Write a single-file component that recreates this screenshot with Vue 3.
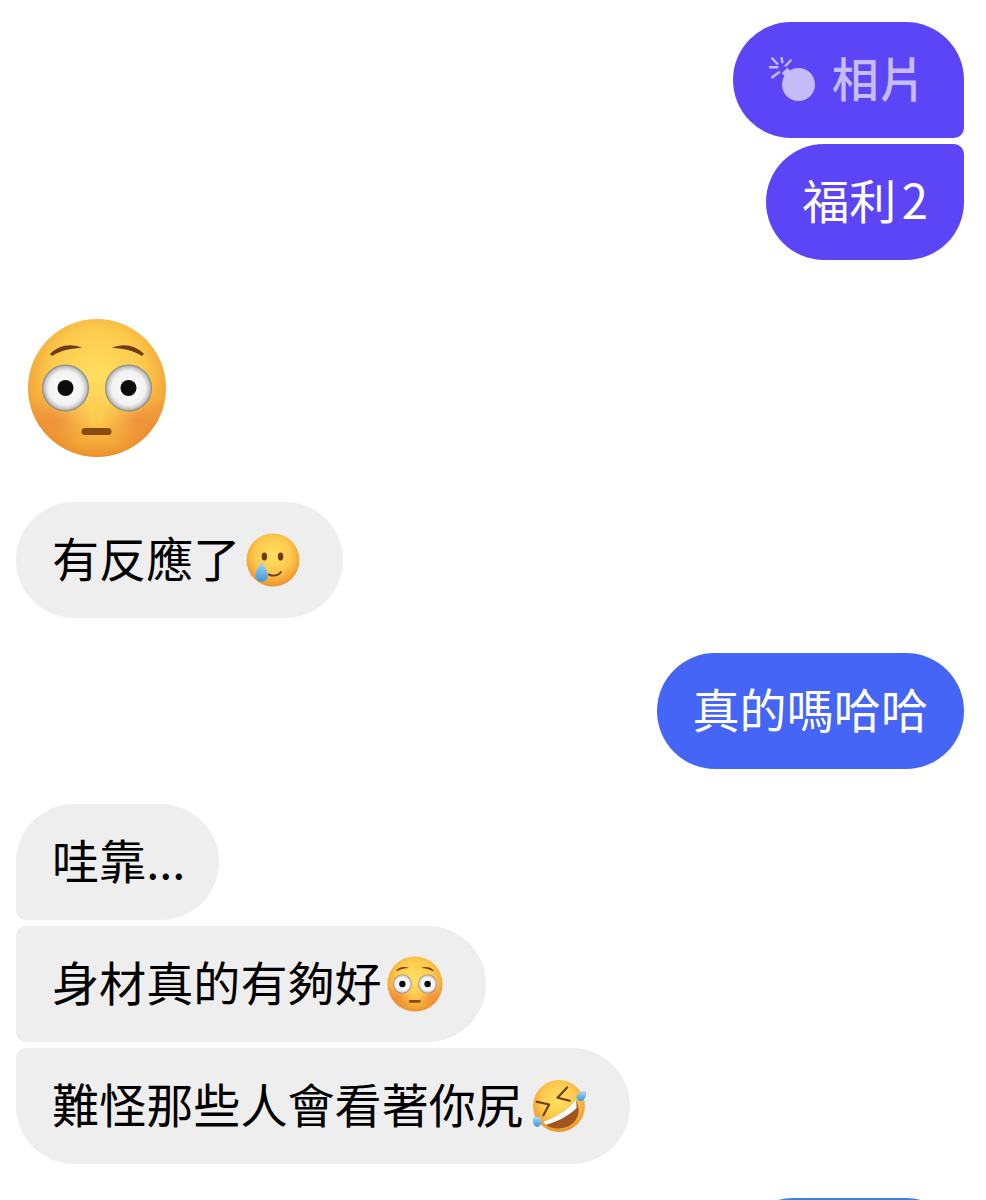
<template>
  <div class="chat">
    <svg class="sprites" width="0" height="0" aria-hidden="true">
      <defs>
        <radialGradient id="faceGrad" cx="50%" cy="40%" r="62%">
          <stop offset="0%" stop-color="#ffdf62" />
          <stop offset="55%" stop-color="#fcc94c" />
          <stop offset="85%" stop-color="#f2a336" />
          <stop offset="100%" stop-color="#e68c2a" />
        </radialGradient>
        <radialGradient id="blushGrad">
          <stop offset="0%" stop-color="#e4623a" stop-opacity="0.4" />
          <stop offset="100%" stop-color="#e4623a" stop-opacity="0" />
        </radialGradient>
        <radialGradient id="eyeGrad">
          <stop offset="0%" stop-color="#ffffff" />
          <stop offset="72%" stop-color="#f2f2f2" />
          <stop offset="90%" stop-color="#c4c4c4" />
          <stop offset="100%" stop-color="#7d7d80" />
        </radialGradient>
        <linearGradient id="tearGrad" x1="0" y1="0" x2="0" y2="1">
          <stop offset="0%" stop-color="#a9dcf5" />
          <stop offset="100%" stop-color="#3f94dc" />
        </linearGradient>
        <clipPath id="faceClip">
          <circle cx="70" cy="70" r="69" />
        </clipPath>
        <symbol id="flushed" viewBox="0 0 140 140">
          <circle cx="70" cy="70" r="69" fill="url(#faceGrad)" />
          <g clip-path="url(#faceClip)">
            <ellipse cx="30" cy="102" rx="36" ry="30" fill="url(#blushGrad)" />
            <ellipse cx="110" cy="102" rx="36" ry="30" fill="url(#blushGrad)" />
          </g>
          <path d="M23 36C31 27 45 25 55 30C46 30 34 32 25 38Z" fill="#6d3c12" />
          <path d="M117 36C109 27 95 25 85 30C94 30 106 32 115 38Z" fill="#6d3c12" />
          <circle cx="38.500" cy="70" r="23.500" fill="url(#eyeGrad)" />
          <circle cx="101.500" cy="70" r="23.500" fill="url(#eyeGrad)" />
          <circle cx="38.500" cy="70" r="8" fill="#0c0c0c" />
          <circle cx="101.500" cy="70" r="8" fill="#0c0c0c" />
          <rect x="54.500" y="110" width="30" height="7" rx="3.500" fill="#8a4a18" />
        </symbol>
        <symbol id="smileTear" viewBox="0 0 52 52">
          <circle cx="26" cy="26" r="25.500" fill="url(#faceGrad)" />
          <ellipse cx="17.700" cy="22.700" rx="2.600" ry="3.900" fill="#6a3b12" />
          <ellipse cx="33.300" cy="22.700" rx="2.600" ry="3.900" fill="#6a3b12" />
          <path d="M22 40C27 42 31 41 33.500 37.500" fill="none" stroke="#6a3b12" stroke-width="1.800" stroke-linecap="round" />
          <path d="M15 27C17 32 21 36 21 41A6 6 0 0 1 9 41C9 36 13 32 15 27Z" fill="url(#tearGrad)" />
        </symbol>
        <symbol id="rofl" viewBox="0 0 54 52">
          <circle cx="27" cy="26" r="25" fill="url(#faceGrad)" />
          <path d="M35 8L25.500 18L37.500 21" fill="none" stroke="#6a3b12" stroke-width="2" stroke-linecap="round" stroke-linejoin="round" />
          <path d="M5.500 22L17.500 24.500L12 35" fill="none" stroke="#6a3b12" stroke-width="2" stroke-linecap="round" stroke-linejoin="round" />
          <path d="M12 41C22 38 36 30 43 20C50 32 44 44 32 47C24 49 15 47 12 41Z" fill="#a0561e" />
          <path d="M12 41C22 38 36 30 43 20C44 24 44 26 44 28C36 36 24 42 14 44Z" fill="#ffffff" />
          <path d="M44 16C46 13 50 11 53 12C54 16 52 20 49 21C46 22 43 19 44 16Z" fill="url(#tearGrad)" />
          <path d="M10 39C8 36 5 36 2.500 37C1 40 2 45 5 46C8 47 11 43 10 39Z" fill="url(#tearGrad)" />
        </symbol>
      </defs>
    </svg>

    <div class="group group-top">
      <div class="bubble purple first-out photo">
        <svg class="bomb" viewBox="0 0 48 44" aria-hidden="true">
          <circle cx="29.500" cy="27.500" r="16.500" fill="#c5bbf6" />
          <path d="M15.500 13.500L23 21" stroke="#c5bbf6" stroke-width="8" />
          <path d="M3.300 1.500L8.300 6.800M12.500 0L13.300 5.200M21.700 3.500L16.700 8.700M0.500 10.200L8.300 10.200M3.300 20.200L10 15.200" stroke="#c5bbf6" stroke-width="2.400" stroke-linecap="round" fill="none" />
        </svg>
        <span>相片</span>
      </div>
      <div class="bubble purple last-out count">福利 2</div>
    </div>

    <svg class="big-emoji" aria-hidden="true"><use href="#flushed" /></svg>

    <div class="bubble gray with-emoji">
      有反應了<svg class="emoji tear" aria-hidden="true"><use href="#smileTear" /></svg>
    </div>

    <div class="bubble blue out-single">真的嗎哈哈</div>

    <div class="group group-in">
      <div class="bubble gray first-in wow">哇靠...</div>
      <div class="bubble gray mid-in with-emoji">
        身材真的有夠好<svg class="emoji flush" aria-hidden="true"><use href="#flushed" /></svg>
      </div>
      <div class="bubble gray last-in with-emoji">
        難怪那些人會看著你尻<svg class="emoji laugh" aria-hidden="true"><use href="#rofl" /></svg>
      </div>
    </div>

    <div class="peek"></div>
  </div>
</template>

<script setup>
</script>

<style scoped>
.chat {
  display: flex;
  flex-direction: column;
  align-items: flex-start;
  height: 1200px;
  padding: 22px 22px 0 16px;
  box-sizing: border-box;
  overflow: hidden;
  background: #ffffff;
  font-family: "Noto Sans CJK TC", "Noto Sans", sans-serif;
}

.sprites {
  position: absolute;
}

.group {
  display: flex;
  flex-direction: column;
  gap: 6px;
  flex: none;
}

.group-top {
  align-self: flex-end;
  align-items: flex-end;
}

.group-in {
  align-items: flex-start;
  margin-top: 35px;
}

.bubble {
  display: flex;
  align-items: center;
  flex: none;
  height: 116px;
  padding: 0 36px 6px;
  box-sizing: border-box;
  border-radius: 58px;
  font-size: 47.1px;
  line-height: 1;
  white-space: nowrap;
}

.purple {
  background: #5b45f6;
  color: #ffffff;
}

.blue {
  background: #4465f6;
  color: #ffffff;
}

.gray {
  background: #eeeeee;
  color: #000000;
}

.first-out {
  border-bottom-right-radius: 10px;
}

.last-out {
  border-top-right-radius: 10px;
}

.first-in {
  border-bottom-left-radius: 10px;
}

.mid-in {
  border-top-left-radius: 10px;
  border-bottom-left-radius: 10px;
}

.last-in {
  border-top-left-radius: 10px;
}

.photo {
  gap: 15px;
  color: #c5bbf6;
  font-weight: 500;
  padding-right: 38px;
}

.count {
  word-spacing: -5px;
}

.wow {
  padding-right: 34px;
}

.with-emoji {
  padding-right: 43px;
}

.bomb {
  width: 48px;
  height: 44px;
  margin-top: 3px;
  flex: none;
}

.big-emoji {
  flex: none;
  width: 140px;
  height: 140px;
  margin: 58px 0 44px 11px;
}

.out-single {
  align-self: flex-end;
  margin-top: 35px;
}

.emoji {
  flex: none;
  margin-top: 6px;
}

.tear {
  width: 54px;
  height: 54px;
  margin-left: 6px;
}

.flush {
  width: 56px;
  height: 56px;
  margin-left: 5px;
}

.laugh {
  width: 56px;
  height: 54px;
  margin-left: 8px;
}

.peek {
  align-self: flex-end;
  width: 229px;
  height: 116px;
  margin-top: 34px;
  border-radius: 58px;
  background: #3a80e0;
  flex: none;
}
</style>

<style>
html,
body {
  overflow: hidden;
  background: #ffffff;
}
</style>
